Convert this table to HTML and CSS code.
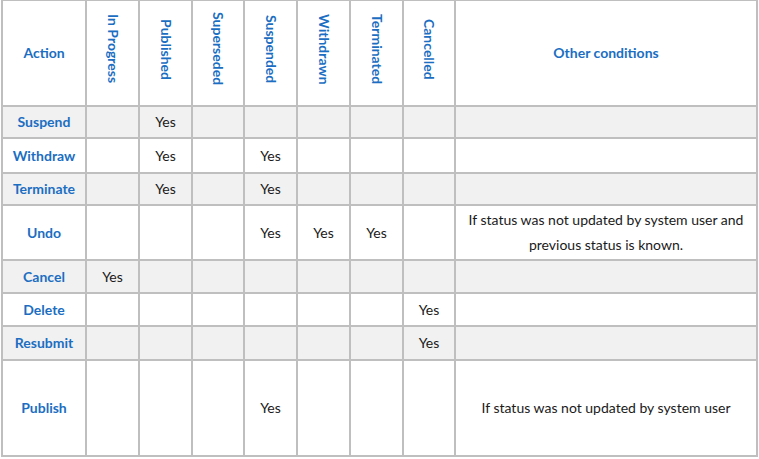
FILE: index.html
```html
<!DOCTYPE html>
<html lang="en">
<head>
<meta charset="utf-8">
<title>Status actions</title>
<link rel="stylesheet" href="styles.css">
</head>
<body>
<table class="matrix">
  <colgroup>
    <col class="c-action">
    <col class="c-st"><col class="c-st"><col class="c-st2"><col class="c-st">
    <col class="c-st"><col class="c-st"><col class="c-st2">
    <col class="c-other">
  </colgroup>
  <thead>
    <tr class="r-head">
      <th class="lbl">Action</th>
      <th class="vert"><span>In Progress</span></th>
      <th class="vert"><span>Published</span></th>
      <th class="vert"><span>Superseded</span></th>
      <th class="vert"><span>Suspended</span></th>
      <th class="vert"><span>Withdrawn</span></th>
      <th class="vert"><span>Terminated</span></th>
      <th class="vert"><span>Cancelled</span></th>
      <th class="lbl">Other conditions</th>
    </tr>
  </thead>
  <tbody>
    <tr class="alt h32"><th>Suspend</th><td></td><td>Yes</td><td></td><td></td><td></td><td></td><td></td><td></td></tr>
    <tr class="h35"><th>Withdraw</th><td></td><td>Yes</td><td></td><td>Yes</td><td></td><td></td><td></td><td></td></tr>
    <tr class="alt h32"><th>Terminate</th><td></td><td>Yes</td><td></td><td>Yes</td><td></td><td></td><td></td><td></td></tr>
    <tr class="h55"><th>Undo</th><td></td><td></td><td></td><td>Yes</td><td>Yes</td><td>Yes</td><td></td><td class="cond">If status was not updated by system user and previous status is known.</td></tr>
    <tr class="alt h33"><th>Cancel</th><td>Yes</td><td></td><td></td><td></td><td></td><td></td><td></td><td></td></tr>
    <tr class="h33"><th>Delete</th><td></td><td></td><td></td><td></td><td></td><td></td><td>Yes</td><td></td></tr>
    <tr class="alt h34"><th>Resubmit</th><td></td><td></td><td></td><td></td><td></td><td></td><td>Yes</td><td></td></tr>
    <tr class="h96"><th>Publish</th><td></td><td></td><td></td><td>Yes</td><td></td><td></td><td></td><td class="cond">If status was not updated by system user</td></tr>
  </tbody>
</table>
</body>
</html>
```

FILE: styles.css
```css
html, body {
  margin: 0;
  padding: 0;
  background: #ffffff;
}

body {
  font-family: Lato, "Open Sans", sans-serif;
  font-size: 14px;
  color: #1a1a1a;
}

.matrix {
  border-collapse: collapse;
  table-layout: fixed;
  width: 756px;
  margin: -1px 0 0 1px;
}

.c-action { width: 84px; }
.c-st { width: 53px; }
.c-st2 { width: 52px; }
.c-other { width: 302px; }

.matrix th,
.matrix td {
  border: 2px solid #bfbfbf;
  padding: 0 4px 1px;
  text-align: center;
  vertical-align: middle;
  line-height: 25px;
}

.matrix th {
  color: #1b6ec2;
  font-weight: 700;
}

.matrix td {
  font-weight: 400;
}

.r-head { height: 106px; }
.h32 { height: 32px; }
.h33 { height: 33px; }
.h34 { height: 34px; }
.h35 { height: 35px; }
.h55 { height: 55px; }
.h96 { height: 96px; }

.alt th,
.alt td {
  background: #f1f1f1;
}

.vert span {
  display: inline-block;
  writing-mode: vertical-rl;
  line-height: 16px;
}

.cond {
  padding: 0 6px 1px;
}
```
